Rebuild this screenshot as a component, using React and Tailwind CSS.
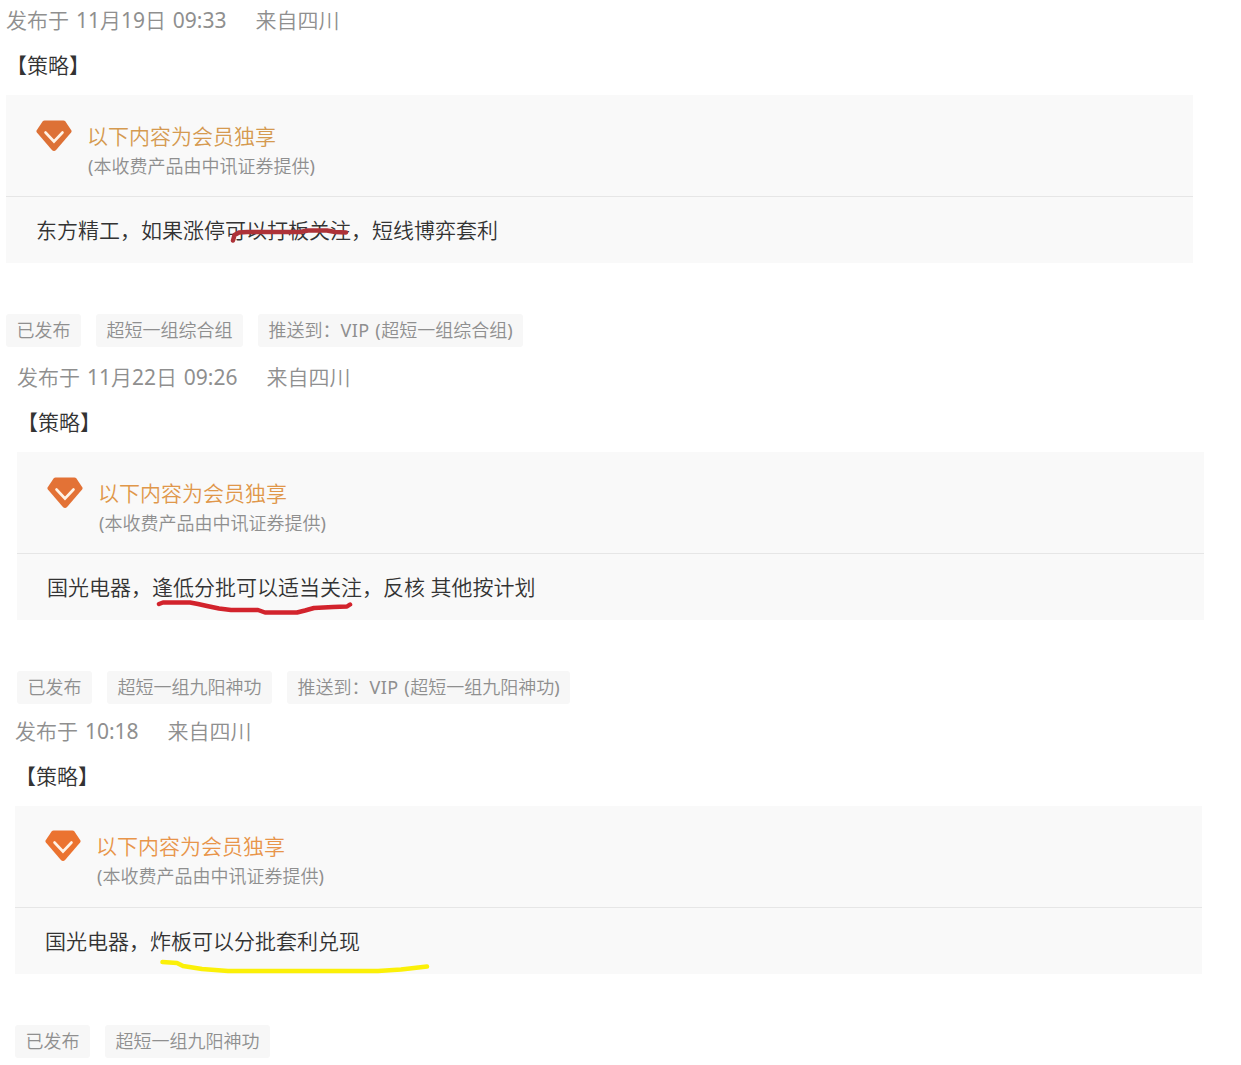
const posts = [
  {
    date: "11月19日",
    time: "09:33",
    place: "来自四川",
    text: "东方精工，如果涨停可以打板关注，短线博弈套利",
    tags: ["已发布", "超短一组综合组"],
    push: "超短一组综合组",
    className: "pl-[6px] h-[357px]",
    headClass: "pt-[26px]",
    gem: "text-[#dd7136]",
    heading: "text-[#d59a50]",
    mark: {
      color: "#ad3238",
      d: "M227 43.5L228.5 38L233 35.5L241 35H294L302 33.5H321L329 35L340 35.5",
    },
  },
  {
    date: "11月22日",
    time: "09:26",
    place: "来自四川",
    text: "国光电器，逢低分批可以适当关注，反核 其他按计划",
    tags: ["已发布", "超短一组九阳神功"],
    push: "超短一组九阳神功",
    className: "pl-[17px] h-[354px]",
    headClass: "pt-[26px]",
    gem: "text-[#e37236]",
    heading: "text-[#e0974a]",
    mark: {
      color: "#d2232c",
      d: "M142 50L146 48.5H173L181 50L190 52L202 54.5L214 56H241L248 58.5H280L288 56.5L297 54L316 53L330 52.5L333 50.5",
    },
  },
  {
    time: "10:18",
    place: "来自四川",
    text: "国光电器，炸板可以分批套利兑现",
    tags: ["已发布", "超短一组九阳神功"],
    className: "pl-[15px] h-[354px]",
    headClass: "pt-[25px]",
    gem: "text-[#eb7330]",
    heading: "text-[#e8954a]",
    mark: {
      color: "#fbf008",
      d: "M147.5 54L162 55L168 58L187 61L213 63H363L386 61.5L399 60L412 58.5",
    },
  },
];

function GemIcon({ className }) {
  return (
    <svg className={className} width="36" height="32" viewBox="0 0 36 32" fill="none">
      <path
        d="M8.6 0.5H27.4Q28.6 0.5 29.4 1.5L35.3 10.3Q36 11.4 35.1 12.5L20.3 29.8Q18 32.2 15.7 29.8L0.9 12.5Q0 11.4 0.7 10.3L6.6 1.5Q7.4 0.5 8.6 0.5Z"
        fill="currentColor"
      />
      <path d="M9.5 12.5L18 21.5L26.5 12.5" stroke="#fff3e6" strokeWidth="2.6" strokeLinecap="round" />
    </svg>
  );
}

function Tag({ children }) {
  return (
    <span className="h-[33px] rounded-[3px] bg-[#f7f7f7] px-[10.5px] text-lg leading-[33px] text-[#8f8f8f]">
      {children}
    </span>
  );
}

function Post({ post }) {
  return (
    <article className={post.className}>
      {/* Publish info */}
      <div className="flex h-10 gap-[29px] leading-10 text-[#8f8f8f]">
        <span className="[word-spacing:1.4px]">
          发布于 <span className="font-normal">
            {post.date && (
              <>
                {post.date.slice(0, 2)}
                <span className="font-[350]">月</span>
                {post.date.slice(3, 5)}
                <span className="font-[350]">日</span>{" "}
              </>
            )}
            {post.time}
          </span>
        </span>
        <span>{post.place}</span>
      </div>

      <h2 className="h-[55px] pt-[5px] leading-10 text-[#333]">【策略】</h2>

      {/* Members only card */}
      <section className="h-[168px] w-[1187px] bg-[#f9f9f9]">
        <div className={post.headClass + " flex h-[102px] gap-[15px] border-b border-[#e6e6e6] pl-[30px]"}>
          <GemIcon className={post.gem + " -mt-px shrink-0"} />
          <div>
            <h3 className={post.heading + " leading-[30px]"}>以下内容为会员独享</h3>
            <p className="pl-px text-lg leading-[30px] text-[#8f8f8f]">
              <span className="font-normal">(</span>本收费产品由中讯证券提供<span className="font-normal">)</span>
            </p>
          </div>
        </div>
        <div className="relative h-[66px] pl-[30px] leading-[67px] text-[#333]">
          {post.text}
          <svg className="absolute top-0 left-0" width="600" height="70" fill="none">
            <path
              d={post.mark.d}
              stroke={post.mark.color}
              strokeWidth="4.5"
              strokeLinecap="round"
              strokeLinejoin="round"
            />
          </svg>
        </div>
      </section>

      {/* Status tags */}
      <div className="mt-[51px] flex gap-[15px]">
        {post.tags.map((tag) => (
          <Tag key={tag}>{tag}</Tag>
        ))}
        {post.push && (
          <Tag>
            推送到：<span className="font-normal tracking-[0.4px] [word-spacing:0.8px]">VIP (</span>
            {post.push}
            <span className="font-normal">)</span>
          </Tag>
        )}
      </div>
    </article>
  );
}

export default function App() {
  return (
    <main
      lang="zh-CN"
      className="h-[1065px] w-[1241px] overflow-hidden bg-white font-['Noto_Sans','Noto_Sans_CJK_SC',sans-serif] text-[21px] font-[350] whitespace-nowrap"
    >
      {posts.map((post) => (
        <Post key={post.date || post.time} post={post} />
      ))}
    </main>
  );
}
